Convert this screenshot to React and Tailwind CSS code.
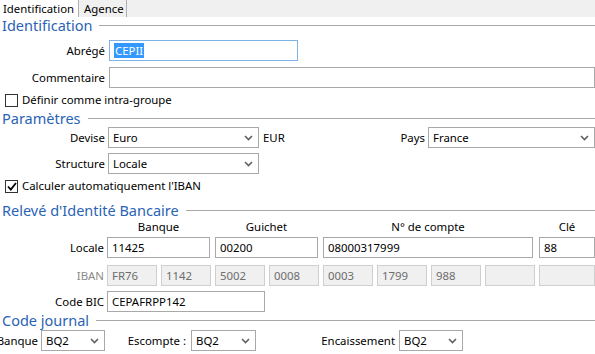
import React from 'react';

const Chevron = () => (
    <svg width="9" height="6" viewBox="0 0 9 6" className="shrink-0">
        <path d="M1 1l3.5 3.5L8 1" stroke="#606060" strokeWidth="1.6" fill="none" />
    </svg>
);

const Select = ({ value, className }) => (
    <div className={`h-[21px] border border-[#a9a9a9] bg-white flex items-center justify-between pl-[4px] pr-[5px] ${className}`}>
        <span className="text-black">{value}</span>
        <Chevron />
    </div>
);

const Input = ({ value, className }) => (
    <div className={`h-[21px] border border-[#a9a9a9] bg-white flex items-center pl-[4px] ${className}`}>
        {value}
    </div>
);

const Header = ({ title }) => (
    <div className="flex items-center h-[17px]">
        <span className="text-[14.5px] text-[#2a63b5] leading-none pl-[2px] whitespace-nowrap">{title}</span>
        <div className="flex-1 h-px bg-[#a8a8a8] ml-[7px]" />
    </div>
);

const Label = ({ children, w = 'w-[105px]' }) => (
    <div className={`${w} shrink-0 flex justify-end whitespace-nowrap`}>{children}</div>
);

const Checkbox = ({ checked, label }) => (
    <div className="flex items-center h-[16px] pl-[5px]">
        <div className="w-[13px] h-[13px] border border-[#333] bg-white flex items-center justify-center">
            {checked && (
                <svg width="10" height="9" viewBox="0 0 10 9">
                    <path d="M1 4.5l2.8 3L9 1" stroke="#000" strokeWidth="1.8" fill="none" />
                </svg>
            )}
        </div>
        <span className="ml-[4px]">{label}</span>
    </div>
);

const iban = ['FR76', '1142', '5002', '0008', '0003', '1799', '988', '', ''];

export default function App() {
    return (
        <div className="w-[595px] h-[354px] bg-white overflow-hidden text-[11.4px] text-black font-['Noto_Sans',sans-serif] leading-none">
            {/* Tabs */}
            <div className="h-[17px] bg-[#f0f0f0] flex">
                <div className="w-[78px] bg-white flex items-center pl-[3px] whitespace-nowrap">Identification</div>
                <div className="w-[49px] border-l border-r border-[#b0b0b0] flex items-center pl-[5px]">Agence</div>
            </div>

            <Header title="Identification" />

            <div className="flex items-center mt-[6px]">
                <Label>Abrégé</Label>
                <div className="ml-[4px] w-[189px] h-[21px] border border-[#7eb4ea] bg-white flex items-center pl-[4px]">
                    <span className="bg-[#3399ff] text-white px-[1px] leading-[15px]">CEPII</span>
                </div>
            </div>

            <div className="flex items-center mt-[6px]">
                <Label>Commentaire</Label>
                <Input value="" className="ml-[4px] flex-1" />
            </div>

            <div className="mt-[4px]">
                <Checkbox label="Définir comme intra-groupe" />
            </div>

            <div className="mt-[2px]">
                <Header title="Paramètres" />
            </div>

            <div className="flex items-center">
                <Label>Devise</Label>
                <Select value="Euro" className="ml-[3px] w-[151px]" />
                <span className="ml-[4px]">EUR</span>
                <div className="flex-1" />
                <span>Pays</span>
                <Select value="France" className="ml-[3px] w-[167px]" />
            </div>

            <div className="flex items-center mt-[5px]">
                <Label>Structure</Label>
                <Select value="Locale" className="ml-[3px] w-[151px]" />
            </div>

            <div className="mt-[4px]">
                <Checkbox checked label="Calculer automatiquement l'IBAN" />
            </div>

            <div className="mt-[8px]">
                <Header title="Relevé d'Identité Bancaire" />
            </div>

            {/* RIB column headers */}
            <div className="flex h-[16px] items-center">
                <div className="w-[107px] shrink-0" />
                <div className="w-[103px] text-center">Banque</div>
                <div className="w-[103px] ml-[5px] text-center">Guichet</div>
                <div className="w-[210px] ml-[5px] text-center">N° de compte</div>
                <div className="flex-1 ml-[6px] text-center">Clé</div>
            </div>

            <div className="flex items-center mt-[2px]">
                <Label w="w-[104px]">Locale</Label>
                <Input value="11425" className="ml-[3px] w-[103px]" />
                <Input value="00200" className="ml-[5px] w-[103px]" />
                <Input value="08000317999" className="ml-[5px] w-[210px]" />
                <Input value="88" className="ml-[6px] flex-1" />
            </div>

            <div className="flex items-center mt-[7px]">
                <Label w="w-[104px]"><span className="text-[#8a8a8a]">IBAN</span></Label>
                <div className="ml-[3px] flex-1 flex gap-[4px]">
                    {iban.map((v, i) => (
                        <div
                            key={i}
                            className={`h-[21px] border border-[#cfcfcf] bg-[#f0f0f0] text-[#6d6d6d] flex items-center pl-[4px] ${i === 8 ? 'flex-1' : 'w-[50px]'}`}
                        >
                            {v}
                        </div>
                    ))}
                </div>
            </div>

            <div className="flex items-center mt-[5px]">
                <Label w="w-[104px]">Code BIC</Label>
                <Input value="CEPAFRPP142" className="ml-[3px] w-[158px]" />
            </div>

            <Header title="Code journal" />

            <div className="flex items-center mt-[1px]">
                <Label w="w-[38px]">Banque</Label>
                <Select value="BQ2" className="ml-[3px] w-[64px]" />
                <Label w="w-[81px]">Escompte :</Label>
                <Select value="BQ2" className="ml-[5px] w-[65px]" />
                <Label w="w-[139px]">Encaissement</Label>
                <Select value="BQ2" className="ml-[4px] w-[64px]" />
            </div>
        </div>
    );
}
